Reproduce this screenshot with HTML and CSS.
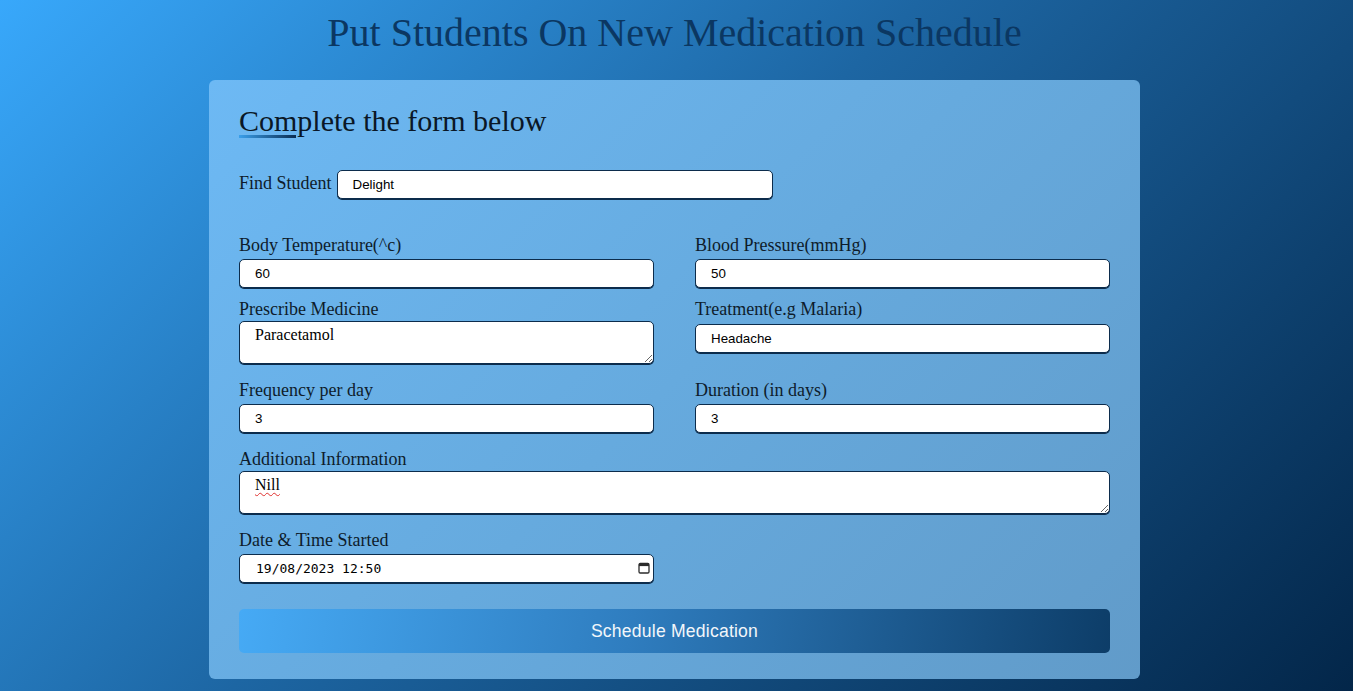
FILE: index.html
```html
<!DOCTYPE html>
<html lang="en">
<head>
<meta charset="utf-8">
<title>Medication Schedule</title>
<link rel="stylesheet" href="styles.css">
</head>
<body>
  <h1 class="page-title">Put Students On New Medication Schedule</h1>
  <form class="card">
    <h2 class="card-title">Complete the form below</h2>
    <div class="find-row">
      <label class="find-label">Find Student</label>
      <input class="control find-input" type="text" value="Delight">
    </div>

    <div class="rows">
      <div class="row row-first">
        <div class="field">
          <label class="label">Body Temperature(^c)</label>
          <input class="control" type="text" value="60">
        </div>
        <div class="field">
          <label class="label">Blood Pressure(mmHg)</label>
          <input class="control" type="text" value="50">
        </div>
      </div>

      <div class="row">
        <div class="field">
          <label class="label">Prescribe Medicine</label>
          <textarea class="area">Paracetamol</textarea>
        </div>
        <div class="field">
          <label class="label">Treatment(e.g Malaria)</label>
          <input class="control" type="text" value="Headache">
        </div>
      </div>

      <div class="row">
        <div class="field">
          <label class="label">Frequency per day</label>
          <input class="control" type="text" value="3">
        </div>
        <div class="field">
          <label class="label">Duration (in days)</label>
          <input class="control" type="text" value="3">
        </div>
      </div>

      <div class="row row-full">
        <div class="field">
          <label class="label">Additional Information</label>
          <textarea class="area spell">Nill</textarea>
        </div>
      </div>

      <div class="row row-last">
        <div class="field">
          <label class="label">Date &amp; Time Started</label>
          <div class="date-wrap">
            <input class="control date-input" type="text" value="19/08/2023 12:50">
            <svg class="cal-icon" width="12" height="12" viewBox="0 0 12 12" aria-hidden="true">
              <rect x="1" y="1.5" width="10" height="9.5" rx="1.2" fill="none" stroke="#2b2b2b" stroke-width="1.3"/>
              <rect x="1" y="1.5" width="10" height="2.6" fill="#2b2b2b"/>
            </svg>
          </div>
        </div>
      </div>
    </div>

    <button class="submit" type="button">Schedule Medication</button>
  </form>
</body>
</html>
```

FILE: styles.css
```css
* {
  box-sizing: border-box;
}

html,
body {
  height: 100%;
}

body {
  margin: 0;
  padding: 0 4px 0 0;
  overflow: hidden;
  background: linear-gradient(135deg, #38a8fb 0%, #1d66a3 45%, #032649 100%);
  font-family: "Liberation Serif", "Times New Roman", serif;
  color: #0e1c2b;
}

.page-title {
  margin: 10px 0 24px;
  text-align: center;
  font-weight: normal;
  font-size: 40px;
  line-height: 46px;
  color: #0b3762;
}

.card {
  display: block;
  width: 931px;
  margin: 0 auto;
  padding: 24px 30px 26px;
  border-radius: 6px;
  background: linear-gradient(135deg, #6db9f4 0%, #66aade 50%, #619bc9 100%);
}

.card-title {
  position: relative;
  margin: 0;
  font-weight: normal;
  font-size: 30px;
  line-height: 34.5px;
  color: #0a1726;
}

.card-title::after {
  content: "";
  position: absolute;
  left: 0;
  bottom: 1px;
  width: 57px;
  height: 3px;
  background: linear-gradient(90deg, #3a9fea, #0b2d52);
}

.find-row {
  display: flex;
  align-items: baseline;
  gap: 5px;
  margin-top: 31px;
}

.find-label,
.label {
  font-size: 18px;
  line-height: 21px;
}

.control {
  display: block;
  height: 29px;
  width: 100%;
  margin: 3.5px 0 0;
  padding: 0 15px;
  border: 1px solid #0c2c4c;
  border-radius: 5px;
  box-shadow: 0 1px 0 #0c2c4c;
  background: #fff;
  color: #000;
  font-family: "Liberation Sans", Arial, sans-serif;
  font-size: 13.33px;
  outline: none;
}

.find-input {
  width: 436px;
  margin: 0;
}

.rows {
  margin-top: 36px;
}

.row {
  display: grid;
  grid-template-columns: 1fr 1fr;
  column-gap: 41px;
  margin-bottom: 16px;
}

.row-first {
  margin-bottom: 11px;
}

.row-full {
  grid-template-columns: 1fr;
}

.row-last {
  margin-bottom: 0;
}

.field {
  display: flex;
  flex-direction: column;
}

.label {
  display: block;
}

.area {
  display: block;
  width: 100%;
  height: 43px;
  margin: 0.5px 0 0;
  padding: 4px 15px;
  border: 1px solid #0c2c4c;
  border-radius: 5px;
  box-shadow: 0 1px 0 #0c2c4c;
  background: #fff;
  color: #000;
  font-family: "Liberation Serif", "Times New Roman", serif;
  font-size: 16px;
  line-height: 18px;
  outline: none;
}

.spell {
  text-decoration: underline wavy #e0312f;
  text-decoration-thickness: 1px;
  text-underline-offset: 2px;
}

.date-wrap {
  position: relative;
}

.date-input {
  font-family: "DejaVu Sans Mono", "Liberation Mono", monospace;
  font-size: 13px;
  padding-left: 16px;
}

.cal-icon {
  position: absolute;
  right: 4px;
  top: 11px;
}

.submit {
  display: block;
  width: 100%;
  height: 44px;
  margin-top: 26px;
  border: none;
  border-radius: 5px;
  background: linear-gradient(100deg, #46aaf5 0%, #2f7dbf 45%, #0d3d68 100%);
  color: #f2f6fa;
  font-family: "Liberation Sans", Arial, sans-serif;
  font-size: 17.6px;
  letter-spacing: 0.2px;
  cursor: pointer;
}
```
